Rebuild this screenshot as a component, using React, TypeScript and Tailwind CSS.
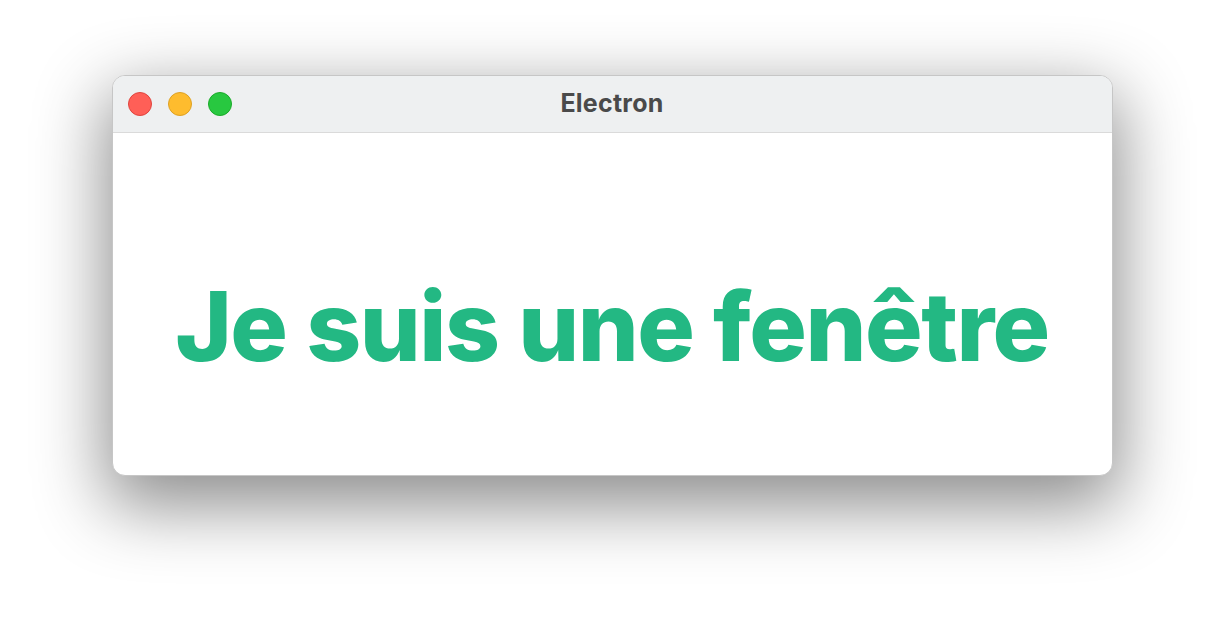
import React from 'react';

const TrafficLights: React.FC = () => (
  <div className="flex items-center gap-[16px]">
    <span className="w-[24px] h-[24px] rounded-full bg-[#ff5f57] border border-[#e0443e]" />
    <span className="w-[24px] h-[24px] rounded-full bg-[#febc2e] border border-[#dea123]" />
    <span className="w-[24px] h-[24px] rounded-full bg-[#28c840] border border-[#1aab29]" />
  </div>
);

const App: React.FC = () => {
  return (
    <div className="w-[1224px] h-[624px] bg-white flex justify-center pt-[75px] font-['Inter',sans-serif]">
      <div className="w-[1001px] h-[401px] rounded-[13px] bg-white border border-[#c6c6c6] overflow-hidden flex flex-col shadow-[0_24px_70px_6px_rgba(0,0,0,0.45)]">
        {/* Title bar */}
        <div className="relative h-[57px] shrink-0 bg-[#eef0f1] border-b border-[#dadada] flex items-center px-[15px]">
          <TrafficLights />
          <div className="absolute inset-0 flex items-center justify-center text-[25px] font-bold text-[#4a4a4a] tracking-[0.01em]">
            Electron
          </div>
        </div>

        {/* Content */}
        <div className="flex-1 flex items-center justify-center pt-[44px]">
          <h1 className="text-[96px] leading-none font-extrabold tracking-[-0.015em] text-[#23b883]">
            Je suis une fenêtre
          </h1>
        </div>
      </div>
    </div>
  );
};

export default App;
